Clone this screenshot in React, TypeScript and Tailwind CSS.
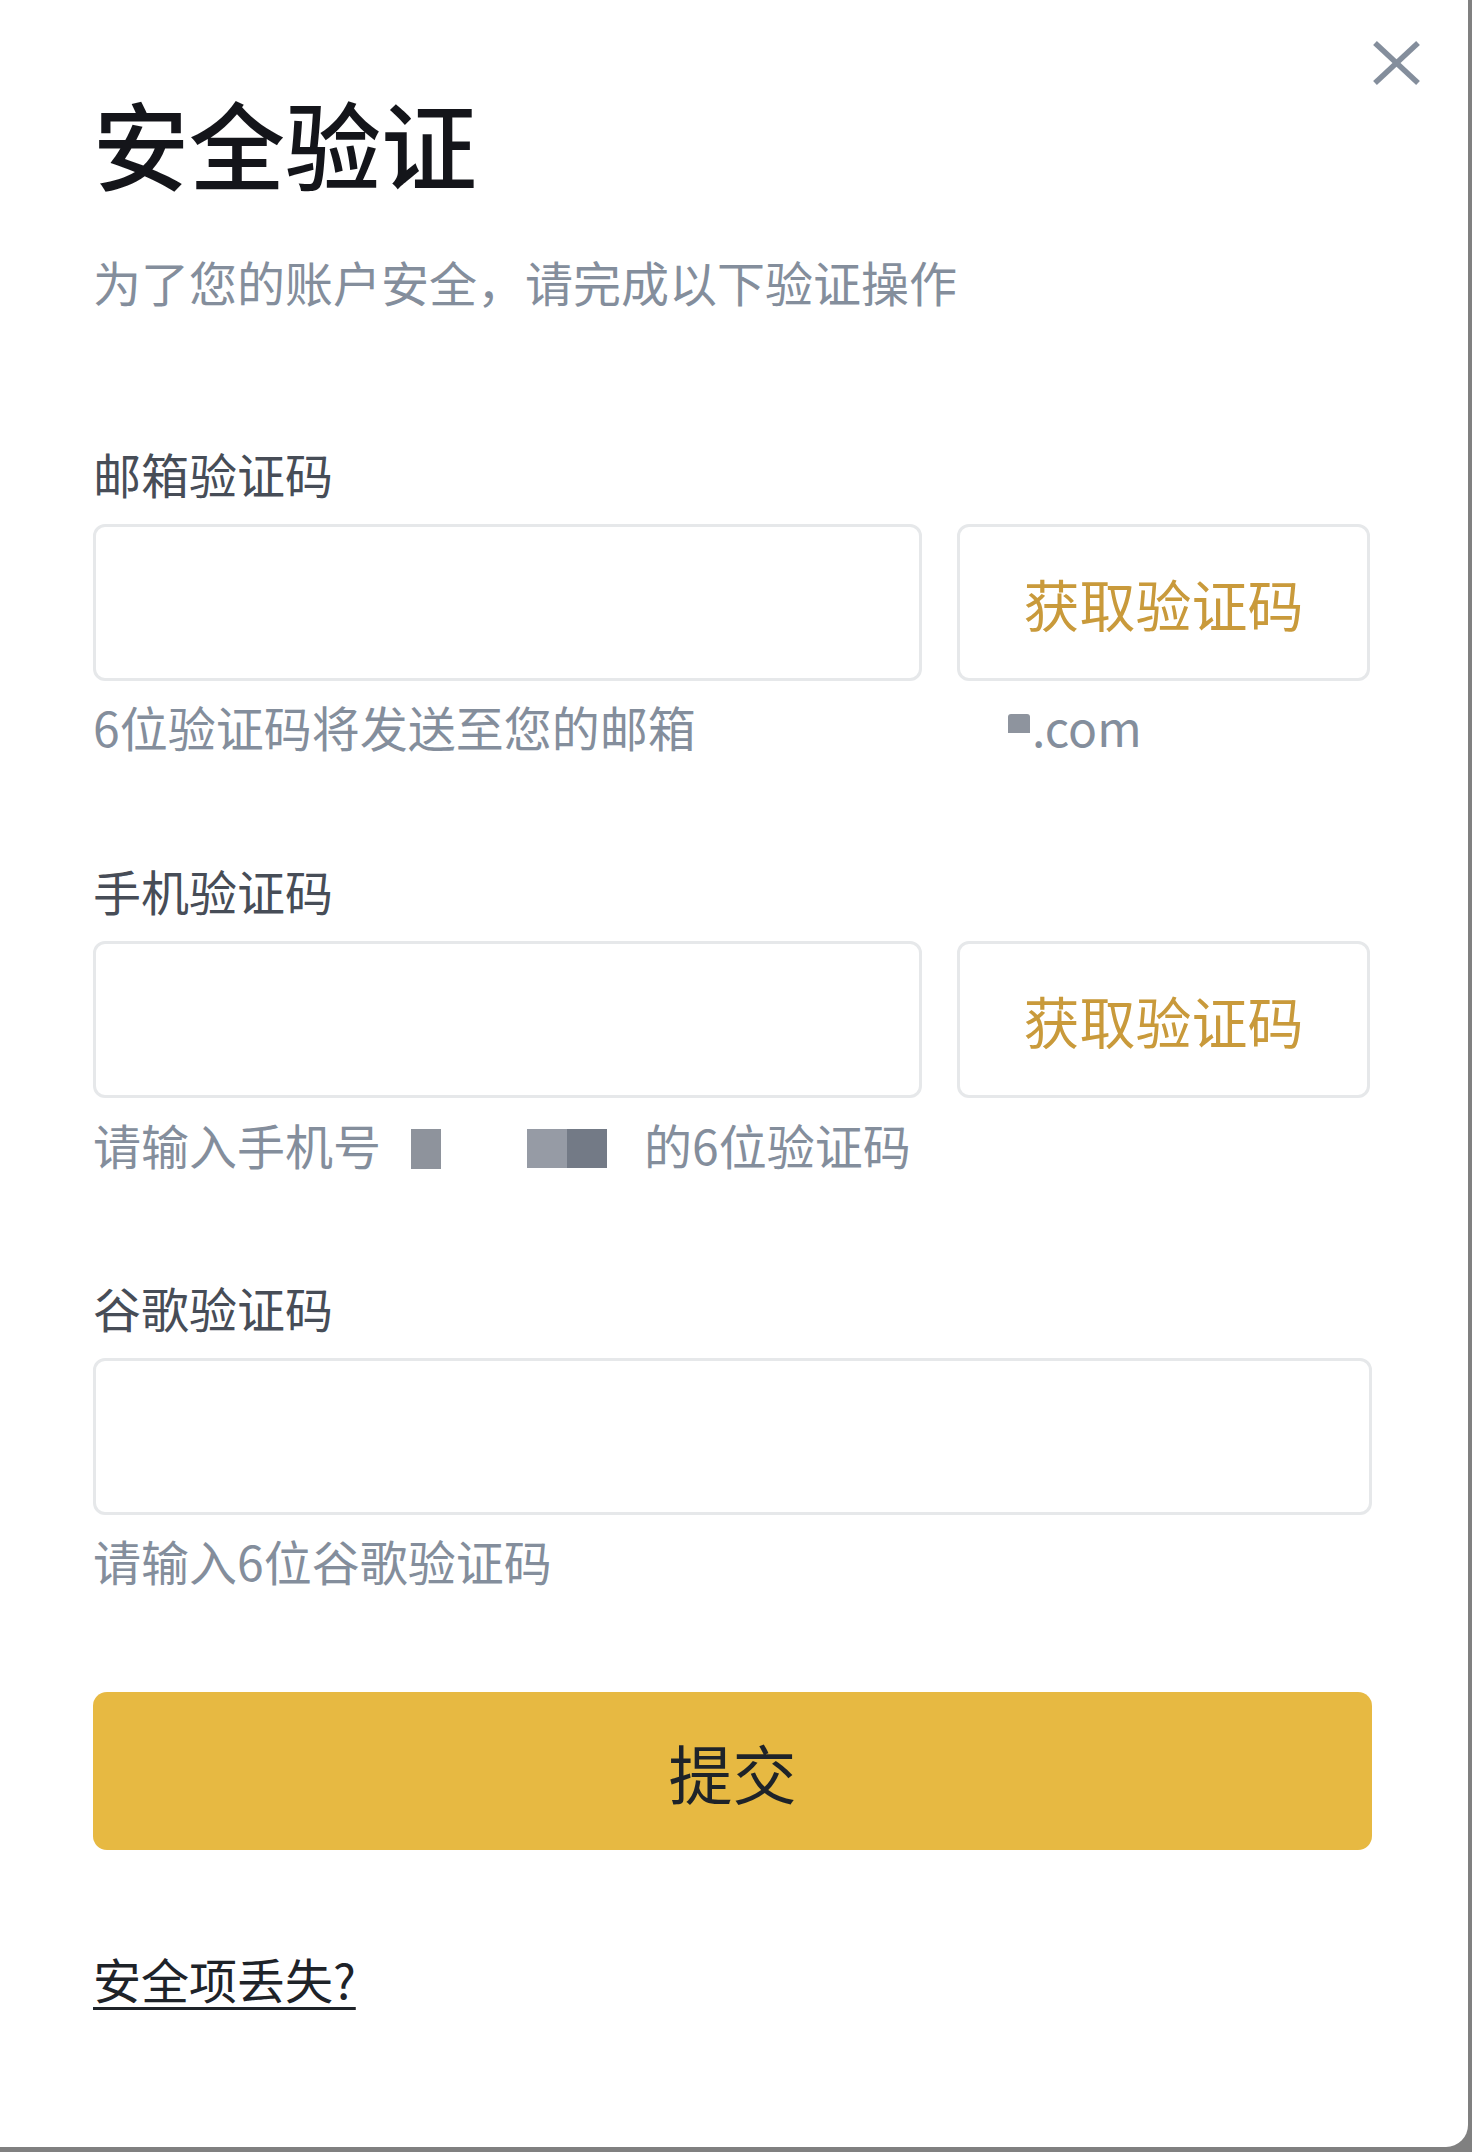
import React from "react";

const font = { fontFamily: '"Noto Sans CJK SC", "Noto Sans", sans-serif' };

const CodeField = ({
  label,
  hint,
  withButton,
}: {
  label: string;
  hint: React.ReactNode;
  withButton?: boolean;
}) => {
  return (
    <div>
      <p className="text-[48px] leading-[48px] text-[#474D57]">{label}</p>
      {withButton ? (
        <div className="mt-[27px] flex gap-[35px]">
          <div className="h-[157px] w-[829px] rounded-[12px] border-[3px] border-[#E6E8EA] bg-white" />
          <button className="flex h-[157px] w-[413px] items-center justify-center rounded-[12px] border-[3px] border-[#E6E8EA] bg-white text-[56px] leading-none text-[#C99A3B]">
            获取验证码
          </button>
        </div>
      ) : (
        <div className="mt-[27px] h-[157px] w-full rounded-[12px] border-[3px] border-[#E6E8EA] bg-white" />
      )}
      <div className="mt-[21px] text-[48px] leading-[48px] text-[#848E9C]">{hint}</div>
    </div>
  );
};

export default function App() {
  return (
    <div className="relative h-[2152px] w-[1472px] bg-[#808080]" style={font}>
      <div className="relative h-[2147px] w-[1468px] rounded-br-[22px] bg-white pl-[93px] pr-[96px] pt-[94px]">
        <button className="absolute left-[1372px] top-[40px] h-[46px] w-[49px]">
          <svg viewBox="0 0 49 46" className="h-full w-full">
            <line x1="3" y1="3" x2="46" y2="43" stroke="#848E9C" strokeWidth="5.5" />
            <line x1="46" y1="3" x2="3" y2="43" stroke="#848E9C" strokeWidth="5.5" />
          </svg>
        </button>

        <h1 className="text-[96px] font-medium leading-[96px] text-[#14151A]">安全验证</h1>
        <p className="mt-[67px] text-[48px] leading-[48px] text-[#848E9C]">
          为了您的账户安全，请完成以下验证操作
        </p>

        <div className="mt-[144px]">
          <CodeField
            label="邮箱验证码"
            withButton
            hint={
              <div className="flex">
                <span className="w-[864px]">6位验证码将发送至您的邮箱</span>
                <span className="flex items-center pl-[51px]">
                  <span className="mb-[6px] h-[19px] w-[22px] rounded-t-[3px] bg-[#8E949E]" />
                  <span className="ml-[2px] text-[#848E9C]">.com</span>
                </span>
              </div>
            }
          />
        </div>

        <div className="mt-[116px]">
          <CodeField
            label="手机验证码"
            withButton
            hint={
              <div className="flex items-center">
                <span>请输入手机号</span>
                <span className="ml-[30px] mt-[10px] h-[40px] w-[30px] bg-[#8E939C]" />
                <span className="ml-[86px] mt-[8px] flex h-[39px] w-[80px]">
                  <span className="h-full w-[40px] bg-[#969BA5]" />
                  <span className="h-full w-[40px] bg-[#737A86]" />
                </span>
                <span className="ml-[37px]">的6位验证码</span>
              </div>
            }
          />
        </div>

        <div className="mt-[114px]">
          <CodeField label="谷歌验证码" hint="请输入6位谷歌验证码" />
        </div>

        <button className="mt-[108px] flex h-[158px] w-full items-center justify-center rounded-[14px] bg-[#E7B942] text-[64px] leading-none text-[#1E2329]">
          提交
        </button>

        <a
          href="#"
          className="mt-[104px] inline-block text-[48px] leading-[48px] text-[#1E2329] underline decoration-[3px] underline-offset-[8px]"
        >
          安全项丢失?
        </a>
      </div>
    </div>
  );
}
